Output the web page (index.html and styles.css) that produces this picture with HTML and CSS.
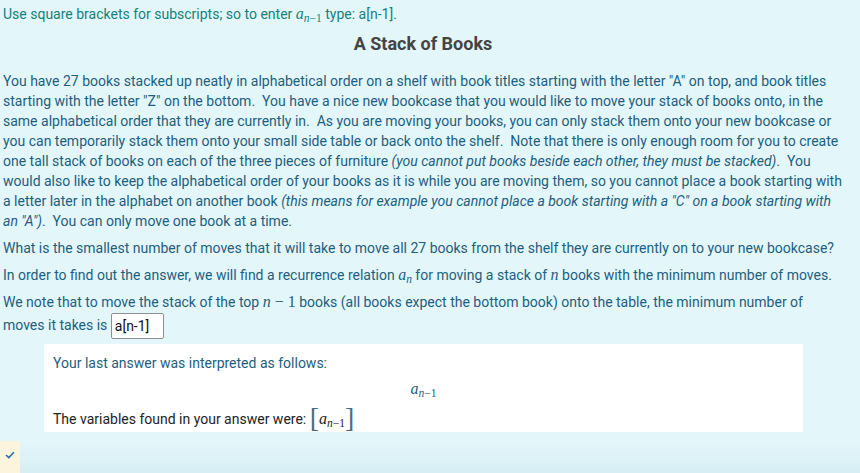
FILE: index.html
```html
<!DOCTYPE html>
<html>
<head>
<meta charset="utf-8">
<link rel="stylesheet" href="styles.css">
</head>
<body>
<div class="page">
  <p class="hint">Use square brackets for subscripts; so to enter <span class="m"><i>a</i><sub><i>n</i>−1</sub></span> type: a[n-1].</p>
  <h2 class="title">A Stack of Books</h2>
  <p class="para">You have 27 books stacked up neatly in alphabetical order on a shelf with book titles starting with the letter "A" on top, and book titles starting with the letter "Z" on the bottom.&nbsp; You have a nice new bookcase that you would like to move your stack of books onto, in the same alphabetical order that they are currently in.&nbsp; As you are moving your books, you can only stack them onto your new bookcase or you can temporarily stack them onto your small side table or back onto the shelf.&nbsp; Note that there is only enough room for you to create one tall stack of books on each of the three pieces of furniture <em>(you cannot put books beside each other, they must be stacked)</em>.&nbsp; You would also like to keep the alphabetical order of your books as it is while you are moving them, so you cannot place a book starting with a letter later in the alphabet on another book <em>(this means for example you cannot place a book starting with a "C" on a book starting with an "A")</em>.&nbsp; You can only move one book at a time.</p>
  <p class="para">What is the smallest number of moves that it will take to move all 27 books from the shelf they are currently on to your new bookcase?</p>
  <p class="para">In order to find out the answer, we will find a recurrence relation <span class="m"><i>a</i><sub><i>n</i></sub></span> for moving a stack of <span class="m"><i>n</i></span> books with the minimum number of moves.</p>
  <p class="para last">We note that to move the stack of the top <span class="m"><i>n</i> − 1</span> books (all books expect the bottom book) onto the table, the minimum number of moves it takes is <span class="answer">a[n-1]</span></p>
  <div class="feedback">
    <p class="fb-line">Your last answer was interpreted as follows:</p>
    <div class="display"><span class="m"><i>a</i><sub><i>n</i>−1</sub></span></div>
    <p class="fb-vars">The variables found in your answer were: <span class="bracket">[</span><span class="m dark"><i>a</i><sub><i>n</i>−1</sub></span><span class="bracket">]</span></p>
  </div>
</div>
<div class="footer">
  <div class="status">
    <svg width="10" height="8" viewBox="0 0 10 8"><path d="M1 4 L3.8 6.6 L9 1.2" fill="none" stroke="#2a6fa8" stroke-width="1.5"/></svg>
  </div>
</div>
</body>
</html>
```

FILE: styles.css
```css
html, body {
  margin: 0;
  padding: 0;
}
body {
  background: #e3f6fa;
  font-family: Roboto, "Noto Sans", sans-serif;
  font-size: 14px;
  color: #1e5e7e;
  width: 860px;
  height: 473px;
  overflow: hidden;
  display: flex;
  flex-direction: column;
}
.page {
  padding: 4px 17px 0 3px;
}
p {
  margin: 0;
  line-height: 20px;
}
.hint {
  color: #13827f;
}
.title {
  margin: 8px 0 16px;
  font-size: 18px;
  line-height: 22px;
  font-weight: 700;
  color: #444;
  text-align: center;
}
.para {
  margin-bottom: 7px;
}
.para.last {
  margin-bottom: 0;
}
.para em {
  font-style: italic;
}
.m {
  font-family: "Liberation Serif", "DejaVu Serif", serif;
  font-size: 16px;
  line-height: 1;
  white-space: nowrap;
}
.m i {
  font-style: italic;
}
.m sub {
  font-size: 11.5px;
  vertical-align: -3px;
  line-height: 1;
}
.answer {
  display: inline-block;
  width: 53px;
  height: 26px;
  box-sizing: border-box;
  border: 1px solid #8f8f8f;
  border-radius: 2px;
  background: #fff;
  color: #111;
  padding: 3px 0 0 3px;
  line-height: 18px;
  vertical-align: middle;
  margin: 1px 0;
}
.feedback {
  margin: 4px 40px 0 41px;
  background: #fff;
  padding: 9px 9px 0;
}
.fb-line {
  color: #1e5e7e;
}
.display {
  text-align: center;
  padding: 5px 0 4px;
  line-height: 22px;
  color: #1e5e7e;
}
.fb-vars {
  color: #222;
  line-height: 26px;
}
.dark {
  color: #222;
}
.bracket {
  font-family: "Liberation Serif", serif;
  font-size: 28px;
  color: #4a6b88;
  vertical-align: -3px;
  line-height: 1;
}
.footer {
  flex: 1;
  margin-top: 9px;
  background: linear-gradient(#e3f6fa, #d6eef4);
  display: flex;
}
.status {
  width: 20px;
  background: #fcf4dc;
  display: flex;
  align-items: flex-start;
  justify-content: center;
  padding-top: 10px;
}
```
